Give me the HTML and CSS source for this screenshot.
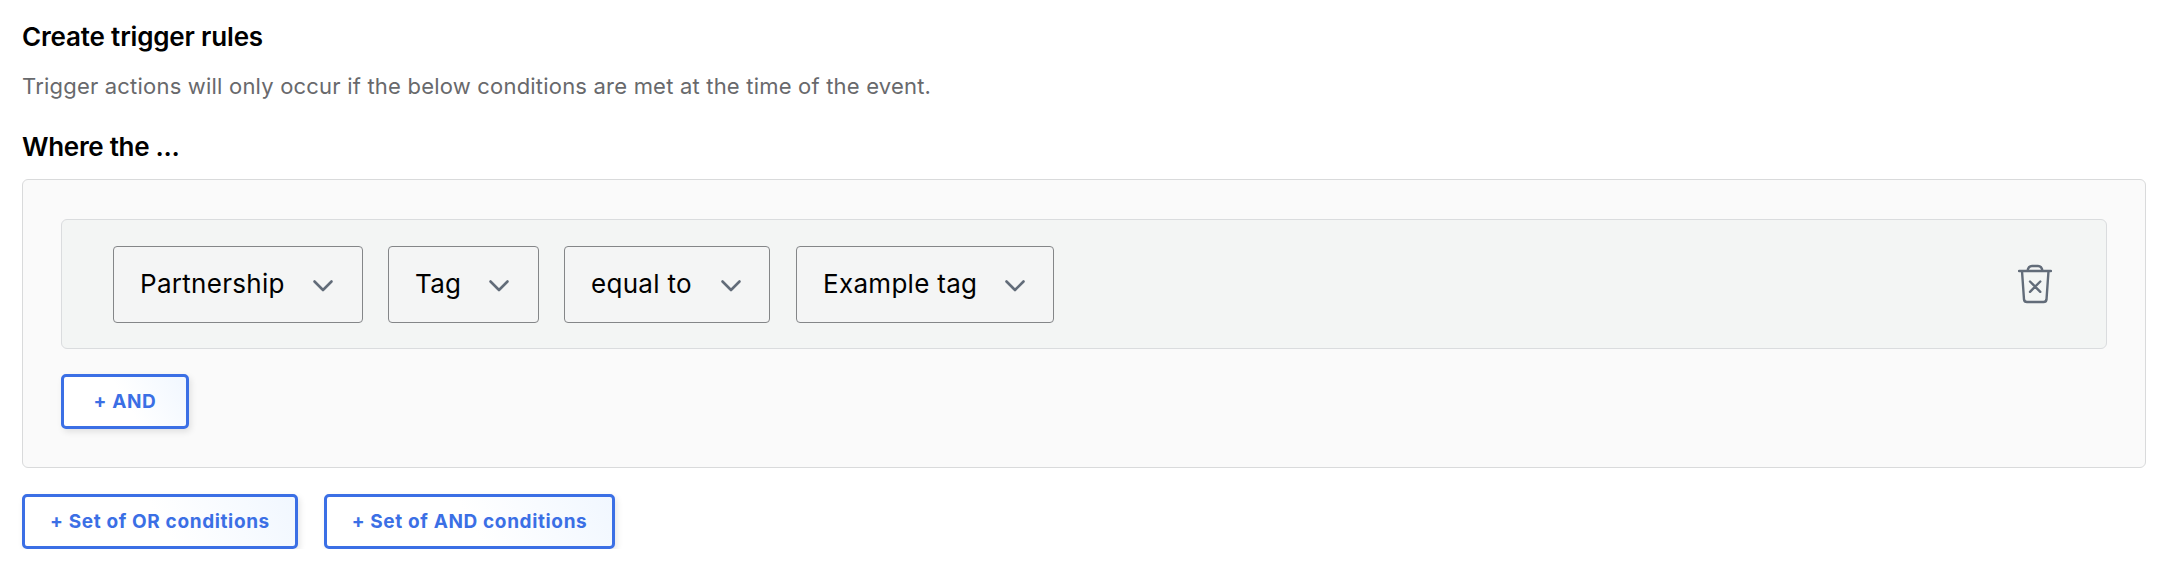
FILE: index.html
```html
<!DOCTYPE html>
<html lang="en">
<head>
<meta charset="utf-8">
<title>Create trigger rules</title>
<link rel="stylesheet" href="styles.css">
</head>
<body>
<main class="page">
  <h2 class="title">Create trigger rules</h2>
  <p class="hint">Trigger actions will only occur if the below conditions are met at the time of the event.</p>
  <h3 class="title title-where">Where the ...</h3>
  <section class="group">
    <div class="rule">
      <div class="selects">
        <button class="select select-subject"><span class="value">Partnership</span><svg class="chevron" viewBox="0 0 22 14"><path d="M2.500 2.500l8.500 8.500 8.500-8.500"/></svg></button>
        <button class="select select-field"><span class="value">Tag</span><svg class="chevron" viewBox="0 0 22 14"><path d="M2.500 2.500l8.500 8.500 8.500-8.500"/></svg></button>
        <button class="select select-operator"><span class="value">equal to</span><svg class="chevron" viewBox="0 0 22 14"><path d="M2.500 2.500l8.500 8.500 8.500-8.500"/></svg></button>
        <button class="select select-value"><span class="value">Example tag</span><svg class="chevron" viewBox="0 0 22 14"><path d="M2.500 2.500l8.500 8.500 8.500-8.500"/></svg></button>
      </div>
      <button class="remove" aria-label="Remove">
        <svg class="trash" viewBox="0 0 34 40"><path d="M1 7H33M9.500 7C10 3.500 11.500 2 14 2H20C22.500 2 24 3.500 24.500 7M4 7L6 35.500Q6.300 38 9 38H25.500Q28.200 38 28.500 35.500L30.500 7M12 17.500L22.300 27.800M22.300 17.500L12 27.800"/></svg>
      </button>
    </div>
    <button class="btn btn-and">+ AND</button>
  </section>
  <div class="actions">
    <button class="btn btn-or-set">+ Set of OR conditions</button>
    <button class="btn btn-and-set">+ Set of AND conditions</button>
  </div>
</main>
</body>
</html>
```
FILE: styles.css
```css
* { box-sizing: border-box; }
body {
  margin: 0;
  background: #fff;
  color: #000;
  font-family: Inter, "Liberation Sans", sans-serif;
}
button {
  margin: 0;
  padding: 0;
  font-family: inherit;
  color: inherit;
}
.page { padding: 21px 22px 0; }
.title {
  margin: 0;
  font-size: 26px;
  font-weight: 600;
  line-height: 32px;
  letter-spacing: -0.17px;
}
.hint {
  margin: 18px 0 0;
  font-size: 22px;
  line-height: 30px;
  letter-spacing: 0.2px;
  color: #68696c;
}
.title-where {
  margin-top: 30px;
  letter-spacing: -0.3px;
}
.group {
  height: 289px;
  margin-top: 16px;
  padding: 39px 38px 0;
  border: 1px solid #d9dadb;
  border-radius: 6px;
  background: #fafafa;
}
.rule {
  display: flex;
  align-items: center;
  justify-content: space-between;
  height: 130px;
  padding: 0 54px 0 51px;
  border: 1px solid #dadcde;
  border-radius: 6px;
  background: #f3f5f4;
}
.selects {
  display: flex;
  gap: 25px;
}
.select {
  display: flex;
  align-items: center;
  justify-content: space-between;
  height: 77px;
  padding: 0 28px 0 26px;
  border: 1px solid #848688;
  border-radius: 4px;
  background: #f4f5f5;
  font-size: 26px;
  letter-spacing: 0.3px;
  white-space: nowrap;
}
.value { padding-bottom: 2px; }
.select-subject { width: 250px; }
.select-field { width: 151px; }
.select-operator {
  width: 206px;
  margin-right: 1px;
  padding-right: 27px;
}
.select-value {
  width: 258px;
  padding-right: 27px;
}
.chevron {
  width: 22px;
  height: 14px;
  margin-top: 3px;
  fill: none;
  stroke: #626c79;
  stroke-width: 2.6;
  stroke-linecap: round;
  stroke-linejoin: round;
}
.remove {
  display: flex;
  border: 0;
  background: none;
}
.trash {
  width: 34px;
  height: 40px;
  fill: none;
  stroke: #626c79;
  stroke-width: 2.4;
  stroke-linecap: round;
  stroke-linejoin: round;
}
.btn {
  height: 55px;
  border: 3px solid #3b6fe5;
  border-radius: 5px;
  background: linear-gradient(60deg, #fff 50%, #f1f7ff);
  box-shadow: 2px 3px 6px rgba(0, 0, 0, 0.1);
  color: #3b6fe5;
  font-size: 19px;
  font-weight: 700;
  letter-spacing: 0.63px;
  white-space: nowrap;
}
.btn-and {
  display: block;
  width: 128px;
  margin-top: 25px;
}
.actions {
  display: flex;
  gap: 26px;
  margin-top: 26px;
}
.btn-or-set { width: 276px; }
.btn-and-set { width: 291px; }
```
